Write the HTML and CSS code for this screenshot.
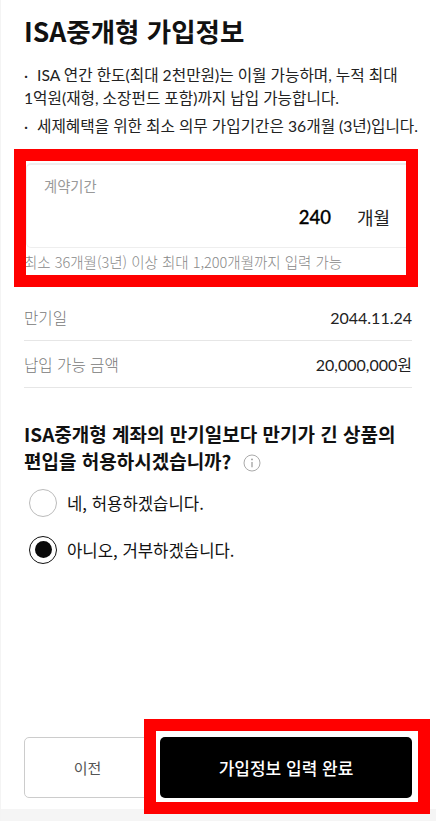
FILE: index.html
```html
<!DOCTYPE html>
<html lang="ko">
<head>
  <meta charset="utf-8">
  <meta name="viewport" content="width=device-width, initial-scale=1.0">
  <link rel="stylesheet" href="styles.css">
</head>
<body>
  <div class="page">
    <div class="content">
      <h1 class="title">ISA중개형 가입정보</h1>
      <ul class="notes">
        <li>ISA 연간 한도(최대 2천만원)는 이월 가능하며, 누적 최대<br>1억원(재형, 소장펀드 포함)까지 납입 가능합니다.</li>
        <li>세제혜택을 위한 최소 의무 가입기간은 36개월 (3년)입니다.</li>
      </ul>

      <div class="term">
        <div class="term-field">
          <div class="term-label">계약기간</div>
          <div class="term-value"><span class="term-number">240</span><span class="term-unit">개월</span></div>
        </div>
        <p class="term-hint">최소 36개월(3년) 이상 최대 1,200개월까지 입력 가능</p>
        <div class="highlight term-highlight"></div>
      </div>

      <div class="info-row">
        <span class="info-label">만기일</span>
        <span class="info-value">2044.11.24</span>
      </div>
      <div class="info-row">
        <span class="info-label">납입 가능 금액</span>
        <span class="info-value">20,000,000원</span>
      </div>

      <h2 class="question">ISA중개형 계좌의 만기일보다 만기가 긴 상품의<br>편입을 허용하시겠습니까?
        <svg class="info-icon" viewBox="0 0 18 18" width="18" height="18">
          <circle cx="9" cy="9" r="8" fill="none" stroke="#aaa" stroke-width="1"/>
          <circle cx="9" cy="5.4" r="0.9" fill="#999"/>
          <path d="M9 8v5.2" stroke="#999" stroke-width="1.2" fill="none"/>
        </svg>
      </h2>

      <div class="options">
        <label class="option"><span class="radio"></span>네, 허용하겠습니다.</label>
        <label class="option"><span class="radio checked"></span>아니오, 거부하겠습니다.</label>
      </div>
    </div>

    <div class="actions">
      <button class="btn btn-prev">이전</button>
      <div class="next-wrap">
        <button class="btn btn-next">가입정보 입력 완료</button>
        <div class="highlight next-highlight"></div>
      </div>
    </div>
    <div class="bottom-band"></div>
  </div>
</body>
</html>
```

FILE: styles.css
```css
* {
  box-sizing: border-box;
}
body {
  margin: 0;
  background: #fff;
  color: #111;
  font-family: Lato, 'Noto Sans CJK KR', sans-serif;
}
.page {
  width: 436px;
  height: 821px;
  display: flex;
  flex-direction: column;
  border-left: 1px solid #f4f4f4;
  overflow: hidden;
}
.content {
  flex: 1;
  padding: 14px 24px 0 23px;
}
.title {
  margin: 0;
  font-family: 'Noto Sans CJK KR', sans-serif;
  font-size: 26.5px;
  font-weight: 700;
  line-height: 34px;
  color: #111;
}
.notes {
  list-style: none;
  margin: 16px -8px 0 0;
  padding: 0;
  font-size: 15.7px;
  line-height: 23px;
  color: #222;
  font-weight: 400;
  white-space: nowrap;
}
.notes li + li {
  margin-top: 5px;
}
.notes li::before {
  content: "·";
  display: inline-block;
  width: 13px;
}
.term {
  position: relative;
  margin-top: 25px;
  height: 112px;
}
.term-field {
  height: 85px;
  margin-left: 2px;
  border: 1px solid #eee;
  border-radius: 5px;
  border-width: 2px 1px 1px 1px;
  padding: 12px 21px 0 17px;
}
.term-label {
  font-family: 'Noto Sans CJK KR', sans-serif;
  font-size: 14.3px;
  line-height: 18px;
  color: #999;
}
.term-value {
  display: flex;
  justify-content: flex-end;
  align-items: center;
  margin-top: 8px;
  line-height: 28px;
}
.term-number {
  font-size: 18.5px;
  font-weight: 500;
  color: #000;
  -webkit-text-stroke: 0.3px #000;
}
.term-unit {
  margin-left: 26px;
  font-family: 'Noto Sans CJK KR', sans-serif;
  font-size: 18px;
  font-weight: 400;
  color: #222;
}
.term-hint {
  margin: 4px 0 0;
  font-family: 'Noto Sans CJK KR', sans-serif;
  font-size: 14.5px;
  font-weight: 300;
  line-height: 20px;
  color: #888;
  white-space: nowrap;
}
.highlight {
  position: absolute;
  border: 12px solid #f00;
  pointer-events: none;
}
.term-highlight {
  left: -10px;
  right: -6px;
  top: -14px;
  bottom: -12px;
}
.info-row {
  display: flex;
  justify-content: space-between;
  align-items: center;
  height: 47px;
  border-bottom: 1px solid #e6e6e6;
}
.term + .info-row {
  margin-top: 19px;
}
.info-label {
  font-family: 'Noto Sans CJK KR', sans-serif;
  font-size: 15.6px;
  font-weight: 300;
  color: #777;
}
.info-value {
  font-size: 16px;
  color: #222;
}
.question {
  margin: 32px 0 0;
  font-family: 'Noto Sans CJK KR', sans-serif;
  font-size: 19px;
  font-weight: 700;
  line-height: 27px;
  color: #111;
}
.info-icon {
  vertical-align: -3px;
  margin-left: 6px;
}
.options {
  margin-top: 5px;
  padding-left: 5px;
}
.option {
  display: flex;
  align-items: center;
  gap: 10px;
  height: 47px;
  font-family: 'Noto Sans CJK KR', sans-serif;
  font-size: 16.7px;
  color: #111;
}
.radio {
  width: 28px;
  height: 28px;
  border: 1px solid #bbb;
  border-radius: 50%;
  display: flex;
  align-items: center;
  justify-content: center;
}
.radio.checked {
  border: 1px solid #111;
}
.radio.checked::after {
  content: "";
  width: 17px;
  height: 17px;
  border-radius: 50%;
  background: #0a0a0a;
}
.actions {
  display: flex;
  gap: 9px;
  padding: 0 24px 0 23px;
}
.btn {
  height: 61px;
  border-radius: 5px;
  font-family: 'Noto Sans CJK KR', sans-serif;
  font-size: 15px;
  cursor: pointer;
}
.btn-prev {
  width: 127px;
  background: #fff;
  border: 1px solid #ccc;
  color: #555;
}
.next-wrap {
  position: relative;
  flex: 1;
  display: flex;
}
.btn-next {
  flex: 1;
  background: #000;
  border: none;
  color: #fff;
  font-size: 17px;
  font-weight: 500;
}
.next-highlight {
  left: -16px;
  right: -18px;
  top: -18px;
  bottom: -16px;
}
.bottom-band {
  height: 12px;
  margin-top: 11px;
  background: #f5f5f5;
}
```
